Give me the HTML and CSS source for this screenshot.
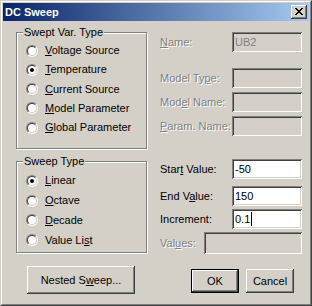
FILE: index.html
```html
<!DOCTYPE html>
<html lang="en">

<head>
    <meta charset="UTF-8">
    <title>DC Sweep</title>
    <link rel="stylesheet" href="styles.css">
</head>

<body>
    <div class="window">
        <div class="frame">
            <div class="titlebar">
                <span class="title">DC Sweep</span>
                <span class="close">
                    <svg width="8" height="7" viewBox="0 0 8 7" shape-rendering="crispEdges">
                        <path d="M0 0h2v1H0zM6 0h2v1H6zM1 1h2v1H1zM5 1h2v1H5zM2 2h4v1H2zM3 3h2v1H3zM2 4h4v1H2zM1 5h2v1H1zM5 5h2v1H5zM0 6h2v1H0zM6 6h2v1H6z" fill="#000"/>
                    </svg>
                </span>
            </div>

            <div class="content">
                <div class="main">
                    <div class="left">
                        <div class="group g1">
                            <span class="group-title">Swept Var. Type</span>
                            <div class="opt"><span class="radio"></span><span><u>V</u>oltage Source</span></div>
                            <div class="opt"><span class="radio on"></span><span><u>T</u>emperature</span></div>
                            <div class="opt"><span class="radio"></span><span><u>C</u>urrent Source</span></div>
                            <div class="opt"><span class="radio"></span><span><u>M</u>odel Parameter</span></div>
                            <div class="opt"><span class="radio"></span><span><u>G</u>lobal Parameter</span></div>
                        </div>
                        <div class="group g2">
                            <span class="group-title">Sweep Type</span>
                            <div class="opt"><span class="radio on"></span><span><u>L</u>inear</span></div>
                            <div class="opt"><span class="radio"></span><span><u>O</u>ctave</span></div>
                            <div class="opt"><span class="radio"></span><span><u>D</u>ecade</span></div>
                            <div class="opt"><span class="radio"></span><span>Value Li<u>s</u>t</span></div>
                        </div>
                    </div>

                    <div class="right">
                        <div class="row r-name">
                            <span class="lbl off"><u>N</u>ame:</span>
                            <div class="edit disabled">UB2</div>
                        </div>
                        <div class="row r-mtype">
                            <span class="lbl off">Model Ty<u>p</u>e:</span>
                            <div class="edit disabled"></div>
                        </div>
                        <div class="row r-mname">
                            <span class="lbl off">Mod<u>e</u>l Name:</span>
                            <div class="edit disabled"></div>
                        </div>
                        <div class="row r-param">
                            <span class="lbl off"><u>P</u>aram. Name:</span>
                            <div class="edit disabled"></div>
                        </div>
                        <div class="row r-start">
                            <span class="lbl">Star<u>t</u> Value:</span>
                            <div class="edit">-50</div>
                        </div>
                        <div class="row r-end">
                            <span class="lbl">End V<u>a</u>lue:</span>
                            <div class="edit">150</div>
                        </div>
                        <div class="row r-inc">
                            <span class="lbl">Increment:</span>
                            <div class="edit">0.1<span class="caret"></span></div>
                        </div>
                        <div class="row r-values">
                            <span class="lbl lbl-short off">Val<u>u</u>es:</span>
                            <div class="edit disabled wide"></div>
                        </div>
                    </div>
                </div>

                <div class="buttons">
                    <div class="btn nested">Nested S<u>w</u>eep...</div>
                    <div class="btn default ok"><span class="btn-inner">OK</span></div>
                    <div class="btn cancel">Cancel</div>
                </div>
            </div>
        </div>
    </div>
</body>

</html>
```

FILE: styles.css
```css
body {
    margin: 0;
    padding: 0;
    background: #d4d0c8;
    font-family: "Liberation Sans", Arial, sans-serif;
    font-size: 11px;
    color: #000;
}

.window {
    width: 312px;
    height: 306px;
    box-sizing: border-box;
    border: 1px solid;
    border-color: #d4d0c8 #404040 #404040 #d4d0c8;
    background: #d4d0c8;
}

.frame {
    height: 100%;
    box-sizing: border-box;
    border: 1px solid;
    border-color: #fff #808080 #808080 #fff;
    padding: 1px;
}

/* title bar */
.titlebar {
    height: 18px;
    display: flex;
    align-items: center;
    justify-content: space-between;
    padding: 0 2px;
    background: linear-gradient(to right, #0a246a, #a6caf0);
}

.title {
    color: #fff;
    font-weight: bold;
    line-height: 13px;
}

.close {
    width: 16px;
    height: 14px;
    box-sizing: border-box;
    padding: 3px 0 0 4px;
    background: #d4d0c8;
    box-shadow: inset -1px -1px #404040, inset 1px 1px #fff, inset -2px -2px #808080, inset 2px 2px #d4d0c8;
}

.close svg {
    display: block;
}

/* dialog body */
.content {
    padding: 11px 0 0 13px;
}

.main {
    display: flex;
    gap: 13px;
}

.left {
    width: 131px;
}

.group {
    position: relative;
    box-sizing: border-box;
    border: 1px solid #808080;
    box-shadow: inset 1px 1px #fff, 1px 1px #fff;
}

.group-title {
    position: absolute;
    top: -7px;
    left: 6px;
    padding: 0 1px;
    line-height: 13px;
    background: #d4d0c8;
}

.g1 {
    height: 117px;
    padding: 8px 0 0 9px;
}

.g1 .opt {
    height: 19.25px;
}

.g2 {
    height: 92px;
    margin-top: 12px;
    padding: 9px 0 0 9px;
}

.g2 .opt {
    height: 19.75px;
}

.opt {
    display: flex;
    align-items: center;
    gap: 7px;
    line-height: 13px;
}

.radio {
    position: relative;
    flex: none;
    width: 12px;
    height: 12px;
    box-sizing: border-box;
    border-radius: 50%;
    border: 1px solid;
    border-color: #808080 #fff #fff #808080;
}

.radio::before {
    content: '';
    display: block;
    width: 10px;
    height: 10px;
    box-sizing: border-box;
    border-radius: 50%;
    border: 1px solid;
    border-color: #404040 #d4d0c8 #d4d0c8 #404040;
    background: #fff;
}

.radio.on::after {
    content: '';
    position: absolute;
    left: 3px;
    top: 3px;
    width: 4px;
    height: 4px;
    border-radius: 50%;
    background: #000;
}

/* right column */
.right {
    width: 142px;
}

.row {
    display: flex;
    align-items: center;
}

.lbl {
    width: 72px;
    line-height: 13px;
    white-space: nowrap;
}

.lbl-short {
    width: 44px;
}

.off {
    color: #808080;
    text-shadow: 1px 1px #fff;
}

.edit {
    width: 70px;
    height: 20px;
    box-sizing: border-box;
    padding: 0 0 0 3px;
    display: flex;
    align-items: center;
    background: #fff;
    box-shadow: inset 1px 1px #808080, inset -1px -1px #fff, inset 2px 2px #404040, inset -2px -2px #d4d0c8;
    line-height: 13px;
}

.edit.disabled {
    background: #d4d0c8;
    color: #808080;
}

.edit.wide {
    width: 98px;
    height: 22px;
}

.caret {
    display: inline-block;
    width: 1px;
    height: 14px;
    margin-left: 1px;
    background: #000;
}

.r-mtype { margin-top: 16px; }
.r-mname { margin-top: 4px; }
.r-param { margin-top: 4px; }
.r-start { margin-top: 23px; }
.r-end { margin-top: 7px; }
.r-inc { margin-top: 3px; }
.r-values { margin-top: 3px; }

/* buttons */
.buttons {
    display: flex;
    align-items: flex-start;
    margin-top: 12px;
}

.btn {
    box-sizing: border-box;
    display: flex;
    align-items: center;
    justify-content: center;
    line-height: 13px;
    box-shadow: inset -1px -1px #404040, inset 1px 1px #fff, inset -2px -2px #808080, inset 2px 2px #d4d0c8;
}

.nested {
    width: 108px;
    height: 28px;
    margin-left: 11px;
}

.ok {
    width: 48px;
    height: 24px;
    margin: 3px 0 0 56px;
}

.btn.default {
    border: 1px solid #000;
    box-shadow: none;
    padding: 0;
}

.btn-inner {
    width: 100%;
    height: 100%;
    display: flex;
    align-items: center;
    justify-content: center;
    box-shadow: inset -1px -1px #404040, inset 1px 1px #fff, inset -2px -2px #808080, inset 2px 2px #d4d0c8;
}

.cancel {
    width: 48px;
    height: 24px;
    margin: 3px 0 0 7px;
}
```
